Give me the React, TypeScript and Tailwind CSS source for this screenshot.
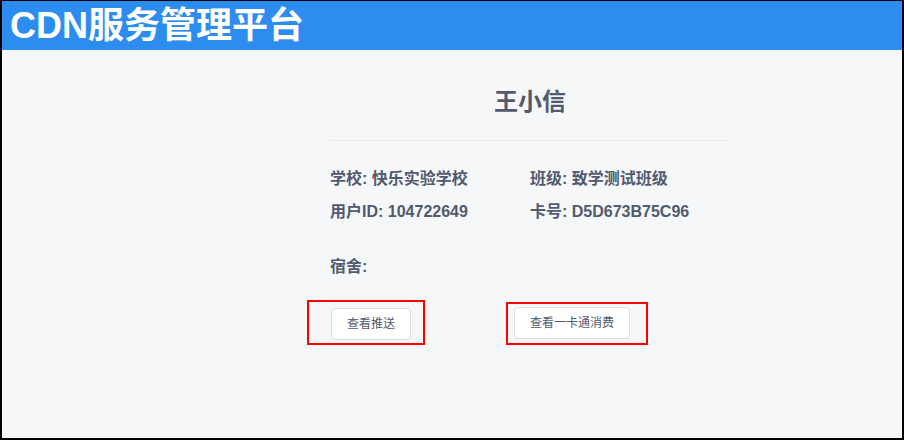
import React from 'react';

const latinCjk = "font-['Liberation_Sans','Noto_Sans_CJK_SC',sans-serif]";

function InfoItem({ label, value }: { label: string; value?: string }) {
  return (
    <div className="w-[200px] text-[16px] font-bold leading-[22px] text-[#515a6e]">
      {label}: {value}
    </div>
  );
}

function PlainButton({ children }: { children: React.ReactNode }) {
  return (
    <button
      type="button"
      className="h-[32px] rounded-[4px] border border-[#dcdee2] bg-white px-[15px] text-[12px] leading-none text-[#515a6e]"
    >
      {children}
    </button>
  );
}

export default function App() {
  return (
    <div
      className={`${latinCjk} flex h-[440px] w-[904px] flex-col border-x-2 border-t border-b-2 border-black bg-[#f5f7f9]`}
    >
      {/* top bar */}
      <header className="flex h-[49px] items-center bg-[#2d8cf0] pl-[8px]">
        <h1 className="text-[36px] font-bold leading-none text-white">CDN服务管理平台</h1>
      </header>

      {/* user card */}
      <main className="ml-[328px] w-[400px]">
        <h2 className="mt-[36px] text-center text-[24px] font-bold leading-[32px] text-[#515a6e]">
          王小信
        </h2>
        <div className="mt-[22px] h-px bg-[#e8eaec]" />

        <div className="mt-[27px] flex">
          <InfoItem label="学校" value="快乐实验学校" />
          <InfoItem label="班级" value="致学测试班级" />
        </div>
        <div className="mt-[11px] flex">
          <InfoItem label="用户ID" value="104722649" />
          <InfoItem label="卡号" value="D5D673B75C96" />
        </div>
        <div className="mt-[33px] flex">
          <InfoItem label="宿舍" />
        </div>

        <div className="mt-[22px] flex items-end">
          <div className="-ml-[23px] h-[45px] w-[118px] border-2 border-[#ff0000] pl-[22px] pt-[6px]">
            <PlainButton>查看推送</PlainButton>
          </div>
          <div className="ml-[81px] h-[43px] w-[142px] border-2 border-[#ff0000] pl-[6px] pt-[3px]">
            <PlainButton>查看一卡通消费</PlainButton>
          </div>
        </div>
      </main>
    </div>
  );
}
